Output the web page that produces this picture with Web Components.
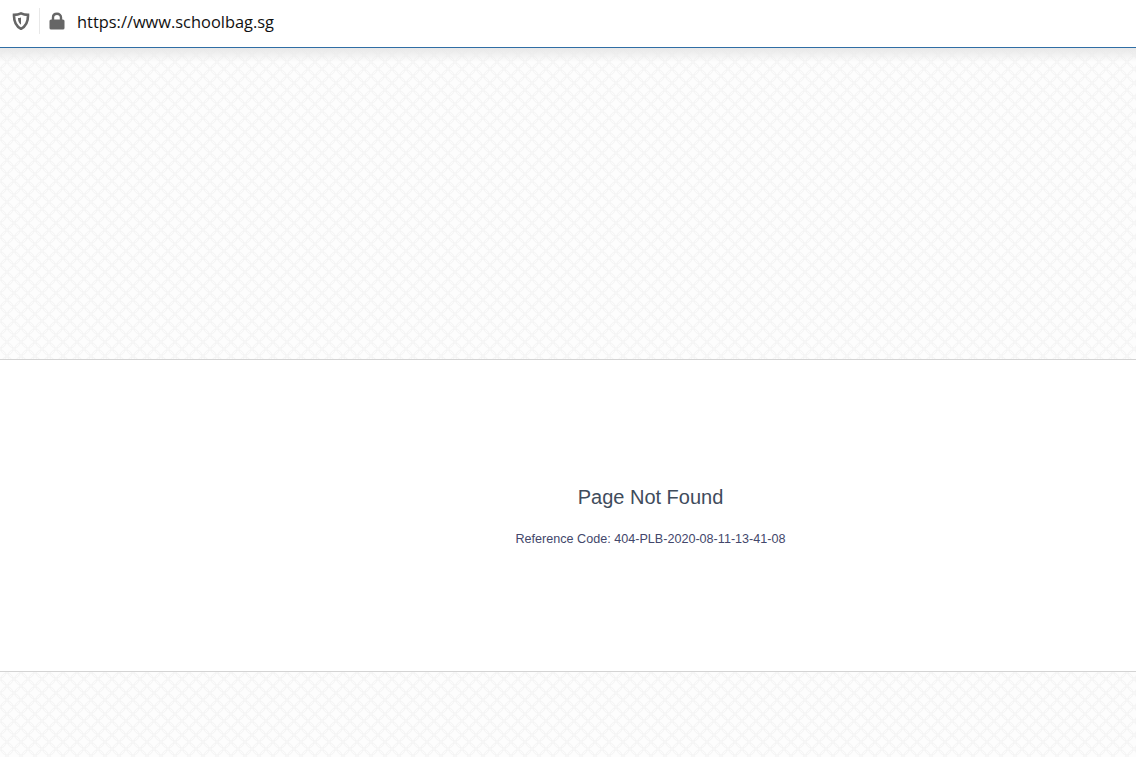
<!DOCTYPE html>
<html>
<head>
<meta charset="utf-8">
<title>Page Not Found</title>
<style>
    html, body { margin: 0; padding: 0; height: 100%; overflow: hidden; background: #fff; }
    body { display: flex; flex-direction: column; height: 757px; }
</style>
</head>
<body>
<browser-bar url="https://www.schoolbag.sg"></browser-bar>
<pattern-band first></pattern-band>
<not-found-panel>
    <span slot="title">Page Not Found</span>
    <span slot="code">Reference Code: 404-PLB-2020-08-11-13-41-08</span>
</not-found-panel>
<pattern-band></pattern-band>

<script>
class browserBar extends HTMLElement {
    connectedCallback() {
        const shadow = this.attachShadow({ mode: "open" });
        shadow.innerHTML = `
            <style>
                :host {
                    display: flex;
                    flex: none;
                    align-items: center;
                    height: 48px;
                    box-sizing: border-box;
                    padding: 0 0 6px 12px;
                    background: #fff;
                    border-bottom: 1px solid #2f6ea5;
                }
                svg { display: block; flex: none; }
                .divider { width: 1px; height: 26px; margin: 0 9px 0 9px; background: #e8e8e8; }
                .url {
                    margin: 2px 0 0 12px;
                    font: 16.4px "Open Sans", "Noto Sans", sans-serif;
                    color: #111;
                    white-space: nowrap;
                }
            </style>
            <svg width="18" height="18" viewBox="0 0 18 18">
                <path d="M9 1.4 C11.4 2.5 13.8 2.9 16 2.9 C16.2 9.5 14 14.2 9 16.8 C4 14.2 1.8 9.5 2 2.9 C4.2 2.9 6.6 2.5 9 1.4 Z" fill="none" stroke="#666" stroke-width="2.6"/>
                <path d="M9 5.4 C8 5.8 7 6 6 6 C6 9 7 11.4 9 12.8 Z" fill="#666"/>
            </svg>
            <div class="divider"></div>
            <svg width="16" height="18" viewBox="0 0 16 18">
                <path d="M4 8 V5.5 C4 3.2 5.7 1.8 8 1.8 C10.3 1.8 12 3.2 12 5.5 V8" fill="none" stroke="#666" stroke-width="2.4"/>
                <rect x="0.5" y="7.5" width="15" height="10" rx="1.6" fill="#666"/>
            </svg>
            <span class="url">${this.getAttribute("url")}</span>
        `;
    }
}

class patternBand extends HTMLElement {
    connectedCallback() {
        const shadow = this.attachShadow({ mode: "open" });
        const ring = (x, y) => `<circle cx="${x}" cy="${y}" r="6" fill="none" stroke="#f4f4f4" stroke-width="1"/>`;
        const tile = encodeURIComponent(`<svg xmlns="http://www.w3.org/2000/svg" width="14" height="14"><rect width="14" height="14" fill="#fdfdfd"/>${ring(7, 7)}${ring(0, 0)}${ring(14, 0)}${ring(0, 14)}${ring(14, 14)}</svg>`);
        shadow.innerHTML = `
            <style>
                :host {
                    display: block;
                    flex: 1 1 0;
                    background: #fcfcfc url("data:image/svg+xml,${tile}");
                }
                :host([first]) {
                    flex: none;
                    height: 311px;
                    background-image: linear-gradient(#e8e8e8, rgba(240,240,240,0) 14px), url("data:image/svg+xml,${tile}");
                }
            </style>
        `;
    }
}

class notFoundPanel extends HTMLElement {
    connectedCallback() {
        const shadow = this.attachShadow({ mode: "open" });
        shadow.innerHTML = `
            <style>
                :host {
                    display: flex;
                    flex: none;
                    flex-direction: column;
                    align-items: center;
                    box-sizing: border-box;
                    height: 313px;
                    padding: 125px 0 0 165px;
                    background: #fff;
                    border-top: 1px solid #d4d4d4;
                    border-bottom: 1px solid #d4d4d4;
                    font-family: "Liberation Sans", Arial, sans-serif;
                    text-align: center;
                }
                .title { font-size: 20px; line-height: 24px; color: #3f4c5c; }
                .code { margin-top: 22px; font-size: 12.6px; line-height: 16px; color: #43476b; }
            </style>
            <div class="title"><slot name="title"></slot></div>
            <div class="code"><slot name="code"></slot></div>
        `;
    }
}

customElements.define("browser-bar", browserBar);
customElements.define("pattern-band", patternBand);
customElements.define("not-found-panel", notFoundPanel);
</script>
</body>
</html>
